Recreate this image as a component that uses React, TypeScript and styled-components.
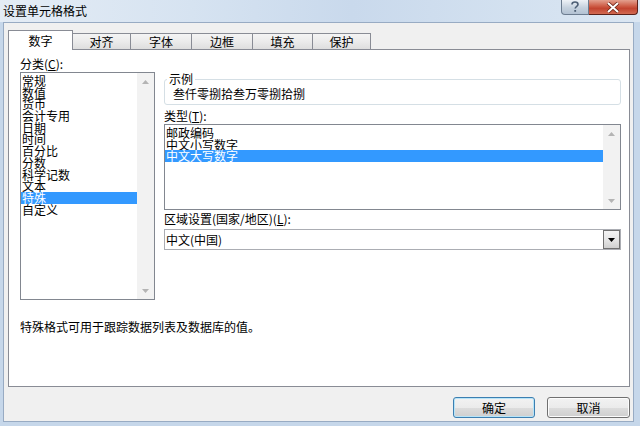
import styled, { createGlobalStyle } from "styled-components";

const GlobalStyle = createGlobalStyle`
  html, body {
    margin: 0;
    padding: 0;
  }
  body {
    font-family: "Noto Sans CJK SC", "Noto Sans", sans-serif;
    font-size: 12px;
    color: #000;
  }
  * {
    box-sizing: border-box;
  }
`;

const Window = styled.div`
  width: 640px;
  height: 426px;
  display: flex;
  flex-direction: column;
  background: #c6d7ea;
  overflow: hidden;
`;

const TitleBar = styled.div`
  height: 22px;
  flex: none;
  display: flex;
  justify-content: space-between;
  align-items: flex-start;
  background: linear-gradient(90deg, #e4ecf5 0%, #d6e3f1 30%, #c9d9ec 55%, #d3e1f0 80%, #dbe6f2 100%);
`;

const TitleText = styled.span`
  padding: 4px 0 0 3px;
  line-height: 14px;
`;

const Controls = styled.div`
  display: flex;
  margin-right: 2px;
`;

const HelpButton = styled.div`
  width: 28px;
  height: 15px;
  border: 1px solid #6c7c90;
  border-top: none;
  border-radius: 0 0 0 4px;
  background: linear-gradient(#eef2f7, #c5d1de 55%, #b3c2d3);
  display: flex;
  align-items: center;
  justify-content: center;
`;

const CloseButton = styled.div`
  width: 49px;
  height: 15px;
  border: 1px solid #5b2119;
  border-left: none;
  border-top: none;
  border-radius: 0 0 4px 0;
  background: linear-gradient(#e3a08f, #cd5a44 45%, #c24430 60%, #d26a52);
  display: flex;
  align-items: center;
  justify-content: center;
`;

const Frame = styled.div`
  flex: 1;
  display: flex;
  padding: 0 6px 4px 3px;
`;

const Body = styled.div`
  flex: 1;
  display: flex;
  flex-direction: column;
  border: 1px solid #98abc3;
  background: #f0f0f0;
  padding: 7px 3px 0 4px;
`;

const TabStrip = styled.div`
  display: flex;
  align-items: flex-end;
  position: relative;
  z-index: 1;
`;

const Tab = styled.div<{ $active?: boolean; $w: number }>`
  width: ${(p) => p.$w}px;
  height: ${(p) => (p.$active ? 20 : 16)}px;
  margin-bottom: ${(p) => (p.$active ? -1 : 0)}px;
  margin-right: -1px;
  border: 1px solid #898c95;
  border-bottom: none;
  background: ${(p) =>
    p.$active ? "#fff" : "linear-gradient(#f4f4f4, #ebebeb 50%, #dedede)"};
  display: flex;
  align-items: center;
  justify-content: center;
  line-height: 14px;
  padding-top: ${(p) => (p.$active ? 0 : 1)}px;
`;

const Panel = styled.div`
  height: 338px;
  border: 1px solid #898c95;
  background: #fff;
  padding: 7px 8px 0 11px;
  display: flex;
  flex-direction: column;
`;

const Columns = styled.div`
  display: flex;
  gap: 9px;
`;

const Column = styled.div<{ $w?: number; $top?: number }>`
  display: flex;
  flex-direction: column;
  ${(p) => (p.$w ? `width: ${p.$w}px; flex: none;` : "flex: 1;")}
  padding-top: ${(p) => p.$top ?? 0}px;
`;

const Label = styled.div<{ $mt?: number }>`
  line-height: 14px;
  margin-top: ${(p) => p.$mt ?? 0}px;
  margin-bottom: 1px;
`;

const ListBox = styled.div<{ $h: number }>`
  height: ${(p) => p.$h}px;
  border: 1px solid #828790;
  display: flex;
  background: #fff;
`;

const Items = styled.div`
  flex: 1;
  padding-top: 2px;
  display: flex;
  flex-direction: column;
`;

const Item = styled.div<{ $selected?: boolean; $lh: number }>`
  height: ${(p) => p.$lh}px;
  line-height: ${(p) => p.$lh}px;
  padding-left: 1px;
  white-space: nowrap;
  background: ${(p) => (p.$selected ? "#3399ff" : "transparent")};
  color: ${(p) => (p.$selected ? "#fff" : "#000")};
`;

const ScrollTrack = styled.div`
  width: 17px;
  flex: none;
  background: #f2f2f2;
  display: flex;
  flex-direction: column;
  justify-content: space-between;
`;

const ArrowBox = styled.div`
  height: 17px;
  display: flex;
  align-items: center;
  justify-content: center;
`;

const GroupBox = styled.fieldset`
  margin: 0;
  border: 1px solid #d5dfe5;
  border-radius: 3px;
  padding: 1px 8px 3px 8px;
`;

const Legend = styled.legend`
  padding: 0 2px;
  margin-left: -6px;
  line-height: 14px;
`;

const Sample = styled.div`
  line-height: 14px;
`;

const Combo = styled.div`
  height: 21px;
  border: 1px solid #abadb3;
  display: flex;
  align-items: stretch;
  margin-top: 2px;
`;

const ComboText = styled.div`
  flex: 1;
  padding-left: 1px;
  line-height: 19px;
`;

const DropButton = styled.div`
  width: 17px;
  border: 1px solid #707070;
  background: linear-gradient(#f3f3f3, #e6e6e6 50%, #d0d0d0);
  display: flex;
  align-items: center;
  justify-content: center;
`;

const Description = styled.div`
  margin-top: 20px;
  line-height: 14px;
`;

const ButtonRow = styled.div`
  display: flex;
  justify-content: flex-end;
  gap: 12px;
  padding-top: 10px;
`;

const Button = styled.div<{ $default?: boolean }>`
  width: ${(p) => (p.$default ? 82 : 83)}px;
  height: 21px;
  border: 1px solid ${(p) => (p.$default ? "#3c7fb1" : "#707070")};
  border-radius: 3px;
  background: linear-gradient(#f2f2f2, #ebebeb 50%, #dddddd 51%, #cfcfcf);
  box-shadow: ${(p) => (p.$default ? "inset 0 0 0 1px #b7e4f8" : "inset 0 0 0 1px #fcfcfc")};
  display: flex;
  align-items: center;
  justify-content: center;
  line-height: 14px;
`;

const tabs = [
  { label: "数字", w: 65 },
  { label: "对齐", w: 59 },
  { label: "字体", w: 62 },
  { label: "边框", w: 62 },
  { label: "填充", w: 61 },
  { label: "保护", w: 59 },
];

const categories = [
  "常规",
  "数值",
  "货币",
  "会计专用",
  "日期",
  "时间",
  "百分比",
  "分数",
  "科学记数",
  "文本",
  "特殊",
  "自定义",
];

const types = ["邮政编码", "中文小写数字", "中文大写数字"];

const UpArrow = () => (
  <svg width="7" height="4" viewBox="0 0 7 4">
    <path d="M0 4 L3.5 0 L7 4 Z" fill="#b4b4b4" />
  </svg>
);

const DownArrow = ({ color = "#b4b4b4" }: { color?: string }) => (
  <svg width="7" height="4" viewBox="0 0 7 4">
    <path d="M0 0 L7 0 L3.5 4 Z" fill={color} />
  </svg>
);

const ScrollBar = () => (
  <ScrollTrack>
    <ArrowBox>
      <UpArrow />
    </ArrowBox>
    <ArrowBox>
      <DownArrow />
    </ArrowBox>
  </ScrollTrack>
);

export default function App() {
  return (
    <>
      <GlobalStyle />
      <Window>
        <TitleBar>
          <TitleText>设置单元格格式</TitleText>
          <Controls>
            <HelpButton>
              <svg width="10" height="12" viewBox="0 0 10 12">
                <path
                  d="M2 3.5 C2 1.5 3.5 1 5 1 C6.8 1 8 2 8 3.5 C8 5.2 5.2 5.4 5.2 7.5"
                  fill="none"
                  stroke="#4d5f75"
                  strokeWidth="1.6"
                />
                <rect x="4.3" y="9" width="1.8" height="1.8" fill="#4d5f75" />
              </svg>
            </HelpButton>
            <CloseButton>
              <svg width="14" height="11" viewBox="0 0 14 11">
                <path d="M2 1 L12 10 M12 1 L2 10" stroke="#6b2418" strokeWidth="3.6" />
                <path d="M2 1 L12 10 M12 1 L2 10" stroke="#fff" strokeWidth="2" />
              </svg>
            </CloseButton>
          </Controls>
        </TitleBar>
        <Frame>
          <Body>
            <TabStrip>
              {tabs.map((t, i) => (
                <Tab key={t.label} $w={t.w} $active={i === 0}>
                  {t.label}
                </Tab>
              ))}
            </TabStrip>
            <Panel>
              <Columns>
                <Column $w={135}>
                  <Label>
                    分类(<u>C</u>):
                  </Label>
                  <ListBox $h={228}>
                    <Items>
                      {categories.map((c) => (
                        <Item key={c} $lh={11.7} $selected={c === "特殊"}>
                          {c}
                        </Item>
                      ))}
                    </Items>
                    <ScrollBar />
                  </ListBox>
                </Column>
                <Column $top={15}>
                  <GroupBox>
                    <Legend>示例</Legend>
                    <Sample>叁仟零捌拾叁万零捌拾捌</Sample>
                  </GroupBox>
                  <Label $mt={4}>
                    类型(<u>T</u>):
                  </Label>
                  <ListBox $h={86}>
                    <Items>
                      {types.map((t) => (
                        <Item key={t} $lh={11.5} $selected={t === "中文大写数字"}>
                          {t}
                        </Item>
                      ))}
                    </Items>
                    <ScrollBar />
                  </ListBox>
                  <Label $mt={2}>
                    区域设置(国家/地区)(<u>L</u>):
                  </Label>
                  <Combo>
                    <ComboText>中文(中国)</ComboText>
                    <DropButton>
                      <DownArrow color="#000" />
                    </DropButton>
                  </Combo>
                </Column>
              </Columns>
              <Description>特殊格式可用于跟踪数据列表及数据库的值。</Description>
            </Panel>
            <ButtonRow>
              <Button $default>确定</Button>
              <Button>取消</Button>
            </ButtonRow>
          </Body>
        </Frame>
      </Window>
    </>
  );
}
